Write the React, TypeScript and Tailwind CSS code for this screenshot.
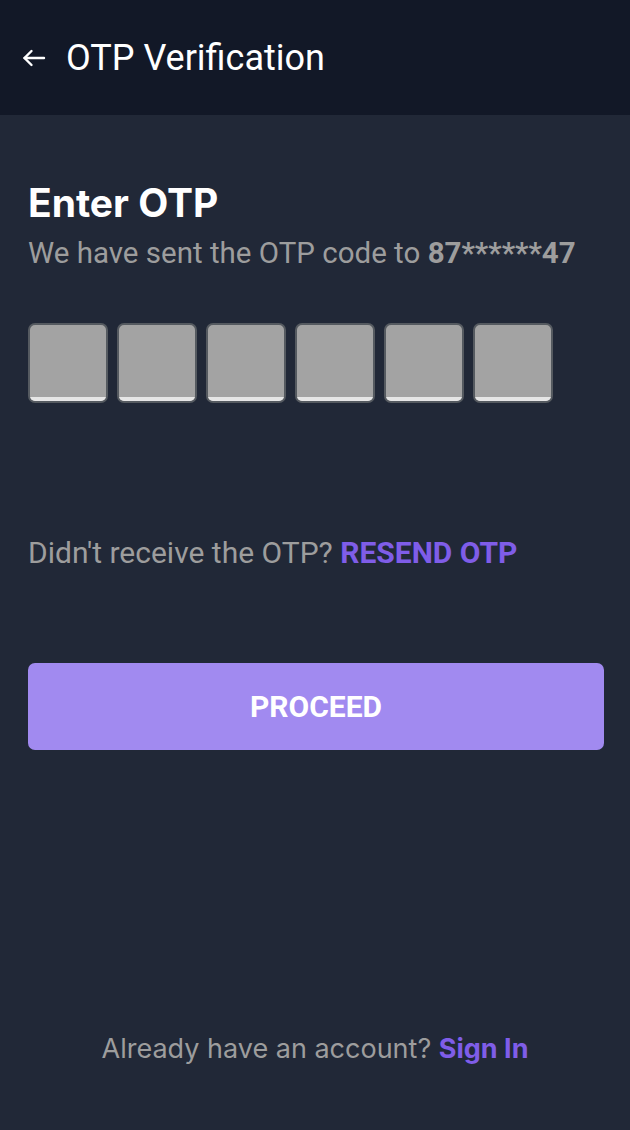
import React from 'react';

const OtpBox: React.FC = () => (
    <div className="w-[80px] h-[80px] rounded-[7px] border-2 border-[#555a60] bg-[#a3a3a3] overflow-hidden flex flex-col justify-end">
        <div className="h-[4px] bg-[#e6e6e6]" />
    </div>
);

const App: React.FC = () => {
    return (
        <div className="w-[630px] h-[1130px] bg-[#212837] flex flex-col" style={{ fontFamily: 'Roboto, "Liberation Sans", sans-serif' }}>
            <header className="h-[115px] bg-[#121827] flex items-center px-[22px] shrink-0">
                <svg width="24" height="18" viewBox="0 0 24 18" fill="none" stroke="#ffffff" strokeWidth="2.4" strokeLinecap="round" strokeLinejoin="round" className="mr-[20px]">
                    <path d="M22 9H2.5" />
                    <path d="M9.5 2L2.5 9l7 7" />
                </svg>
                <h1 className="text-[36px] text-white font-normal leading-none">OTP Verification</h1>
            </header>

            <main className="flex-1 flex flex-col px-[28px] pt-[66px]">
                <h2 className="text-[39px] font-bold text-white leading-[44px]" style={{ fontFamily: 'Inter, Roboto, sans-serif' }}>Enter OTP</h2>
                <p className="text-[29.5px] text-[#9d9d9d] mt-[10px] leading-[36px]">
                    We have sent the OTP code to <span className="font-bold">87******47</span>
                </p>

                <div className="flex gap-[9px] mt-[52px]">
                    <OtpBox />
                    <OtpBox />
                    <OtpBox />
                    <OtpBox />
                    <OtpBox />
                    <OtpBox />
                </div>

                <p className="text-[30px] text-[#9d9d9d] mt-[132px] leading-[36px]">
                    Didn't receive the OTP? <span className="font-bold text-[#7f5de8]">RESEND OTP</span>
                </p>

                <button className="mt-[92px] h-[87px] w-[576px] rounded-[7px] bg-[#a18af0] text-white text-[30px] font-bold">
                    PROCEED
                </button>

                <div className="flex-1" />

                <p className="text-center text-[27px] text-[#9d9d9d] mb-[64px] leading-[34px]" style={{ fontFamily: 'Inter, Roboto, sans-serif' }}>
                    Already have an account? <span className="font-bold text-[#7f5de8]">Sign In</span>
                </p>
            </main>
        </div>
    );
};

export default App;
